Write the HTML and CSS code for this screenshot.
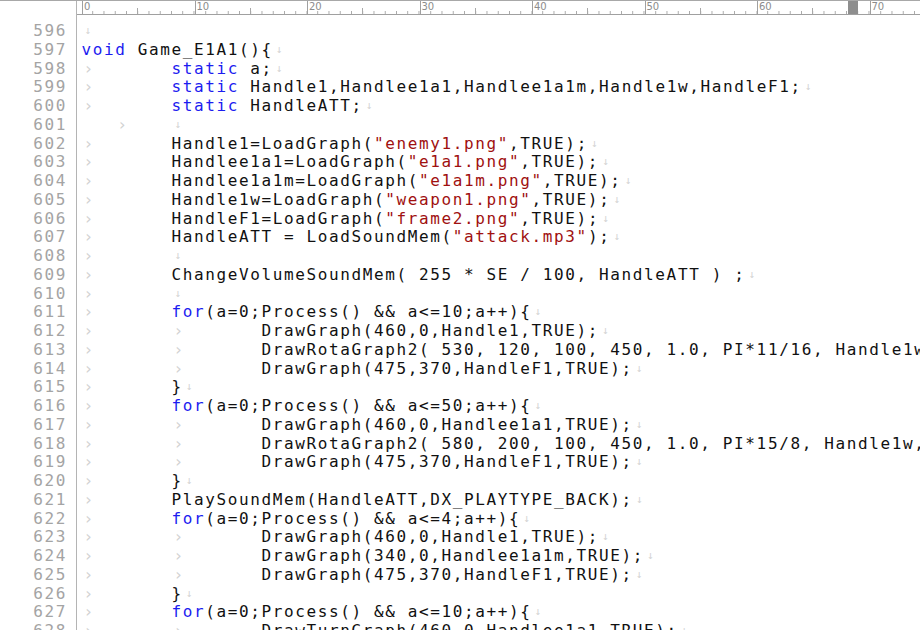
FILE: index.html
```html
<!DOCTYPE html>
<html lang="ja">
<head>
<meta charset="utf-8">
<title>Game_E1A1</title>
<link rel="stylesheet" href="styles.css">
</head>
<body>
<div class="editor">
  <div class="corner"></div>
  <div class="ruler">
    <div class="rcell">0</div>
    <div class="rcell">10</div>
    <div class="rcell">20</div>
    <div class="rcell">30</div>
    <div class="rcell">40</div>
    <div class="rcell">50</div>
    <div class="rcell">60</div>
    <div class="rcell">70</div>
    <div class="caret-mark"></div>
  </div>
  <div class="gutter">
    <div>596</div><div>597</div><div>598</div><div>599</div><div>600</div><div>601</div><div>602</div><div>603</div><div>604</div><div>605</div><div>606</div><div>607</div><div>608</div><div>609</div><div>610</div><div>611</div><div>612</div><div>613</div><div>614</div><div>615</div><div>616</div><div>617</div><div>618</div><div>619</div><div>620</div><div>621</div><div>622</div><div>623</div><div>624</div><div>625</div><div>626</div><div>627</div><div>628</div>
  </div>
  <div class="code">
<div class="ln"><span class="e">↓</span></div>
<div class="ln"><span class="k">void</span> Game_E1A1(){<span class="e">↓</span></div>
<div class="ln"><span class="t">›</span><span class="k">static</span> a;<span class="e">↓</span></div>
<div class="ln"><span class="t">›</span><span class="k">static</span> Handle1,Handlee1a1,Handlee1a1m,Handle1w,HandleF1;<span class="e">↓</span></div>
<div class="ln"><span class="t">›</span><span class="k">static</span> HandleATT;<span class="e">↓</span></div>
<div class="ln">   <span class="t t5">›</span><span class="e">↓</span></div>
<div class="ln"><span class="t">›</span>Handle1=LoadGraph(<span class="s">"enemy1.png"</span>,TRUE);<span class="e">↓</span></div>
<div class="ln"><span class="t">›</span>Handlee1a1=LoadGraph(<span class="s">"e1a1.png"</span>,TRUE);<span class="e">↓</span></div>
<div class="ln"><span class="t">›</span>Handlee1a1m=LoadGraph(<span class="s">"e1a1m.png"</span>,TRUE);<span class="e">↓</span></div>
<div class="ln"><span class="t">›</span>Handle1w=LoadGraph(<span class="s">"weapon1.png"</span>,TRUE);<span class="e">↓</span></div>
<div class="ln"><span class="t">›</span>HandleF1=LoadGraph(<span class="s">"frame2.png"</span>,TRUE);<span class="e">↓</span></div>
<div class="ln"><span class="t">›</span>HandleATT = LoadSoundMem(<span class="s">"attack.mp3"</span>);<span class="e">↓</span></div>
<div class="ln"><span class="t">›</span><span class="e">↓</span></div>
<div class="ln"><span class="t">›</span>ChangeVolumeSoundMem( 255 * SE / 100, HandleATT ) ;<span class="e">↓</span></div>
<div class="ln"><span class="t">›</span><span class="e">↓</span></div>
<div class="ln"><span class="t">›</span><span class="k">for</span>(a=0;Process() &amp;&amp; a&lt;=10;a++){<span class="e">↓</span></div>
<div class="ln"><span class="t">›</span><span class="t">›</span>DrawGraph(460,0,Handle1,TRUE);<span class="e">↓</span></div>
<div class="ln"><span class="t">›</span><span class="t">›</span>DrawRotaGraph2( 530, 120, 100, 450, 1.0, PI*11/16, Handle1w, TRUE );<span class="e">↓</span></div>
<div class="ln"><span class="t">›</span><span class="t">›</span>DrawGraph(475,370,HandleF1,TRUE);<span class="e">↓</span></div>
<div class="ln"><span class="t">›</span>}<span class="e">↓</span></div>
<div class="ln"><span class="t">›</span><span class="k">for</span>(a=0;Process() &amp;&amp; a&lt;=50;a++){<span class="e">↓</span></div>
<div class="ln"><span class="t">›</span><span class="t">›</span>DrawGraph(460,0,Handlee1a1,TRUE);<span class="e">↓</span></div>
<div class="ln"><span class="t">›</span><span class="t">›</span>DrawRotaGraph2( 580, 200, 100, 450, 1.0, PI*15/8, Handle1w, TRUE );<span class="e">↓</span></div>
<div class="ln"><span class="t">›</span><span class="t">›</span>DrawGraph(475,370,HandleF1,TRUE);<span class="e">↓</span></div>
<div class="ln"><span class="t">›</span>}<span class="e">↓</span></div>
<div class="ln"><span class="t">›</span>PlaySoundMem(HandleATT,DX_PLAYTYPE_BACK);<span class="e">↓</span></div>
<div class="ln"><span class="t">›</span><span class="k">for</span>(a=0;Process() &amp;&amp; a&lt;=4;a++){<span class="e">↓</span></div>
<div class="ln"><span class="t">›</span><span class="t">›</span>DrawGraph(460,0,Handle1,TRUE);<span class="e">↓</span></div>
<div class="ln"><span class="t">›</span><span class="t">›</span>DrawGraph(340,0,Handlee1a1m,TRUE);<span class="e">↓</span></div>
<div class="ln"><span class="t">›</span><span class="t">›</span>DrawGraph(475,370,HandleF1,TRUE);<span class="e">↓</span></div>
<div class="ln"><span class="t">›</span>}<span class="e">↓</span></div>
<div class="ln"><span class="t">›</span><span class="k">for</span>(a=0;Process() &amp;&amp; a&lt;=10;a++){<span class="e">↓</span></div>
<div class="ln"><span class="t">›</span><span class="t">›</span>DrawTurnGraph(460,0,Handlee1a1,TRUE);<span class="e">↓</span></div>
  </div>
</div>
</body>
</html>
```
FILE: styles.css
```css
html, body {
  margin: 0;
  padding: 0;
  background: #ffffff;
}

.editor {
  width: 920px;
  height: 630px;
  overflow: hidden;
  display: grid;
  grid-template-columns: 77px 1fr;
  grid-template-rows: 14px 1fr;
  border-top: 1px solid #a8a8a8;
  box-sizing: border-box;
  background: #ffffff;
}

.corner {
  border-right: 1px solid #b4b4b4;
}

.ruler {
  position: relative;
  display: flex;
  padding-left: 5px;
  border-bottom: 1px solid #a0a0a0;
  overflow: hidden;
  box-sizing: border-box;
  height: 14px;
}

.rcell {
  flex: 0 0 112.5px;
  box-sizing: border-box;
  border-left: 1px solid #a0a0a0;
  padding: 1px 0 0 1px;
  font-family: "DejaVu Sans", sans-serif;
  font-size: 10px;
  line-height: 10px;
  color: #8c8c8c;
  background-image:
    linear-gradient(#a8a8a8, #a8a8a8),
    linear-gradient(to right, #a8a8a8 0 1px, transparent 1px);
  background-size: 1px 6px, 11.25px 3px;
  background-position: 55.25px bottom, -1px bottom;
  background-repeat: no-repeat, repeat-x;
  background-origin: border-box;
}

.caret-mark {
  position: absolute;
  left: 771px;
  top: 0;
  width: 10px;
  height: 13px;
  background: #8e8e8e;
}

.gutter {
  border-right: 1px solid #b4b4b4;
  padding-top: 7px;
  padding-right: 9px;
  text-align: right;
  font-family: "DejaVu Sans Mono", monospace;
  font-size: 16px;
  line-height: 18.75px;
  letter-spacing: 1.62px;
  color: #a4a4a4;
  overflow: hidden;
}

.code {
  padding-top: 7px;
  padding-left: 4.5px;
  font-family: "DejaVu Sans Mono", monospace;
  font-size: 16px;
  line-height: 18.75px;
  letter-spacing: 1.62px;
  color: #111111;
  overflow: hidden;
}

.ln {
  white-space: pre;
  height: 18.75px;
}

.k {
  color: #1c1cf0;
}

.s {
  color: #a01010;
}

.t {
  display: inline-block;
  width: 90px;
  color: #d2d2d2;
  padding-left: 2px;
  box-sizing: border-box;
}

.t5 {
  width: 56.25px;
}

.e {
  display: inline-block;
  padding-left: 3px;
  font-size: 11px;
  color: #d4d4d4;
  vertical-align: top;
  line-height: 18.75px;
}
```
